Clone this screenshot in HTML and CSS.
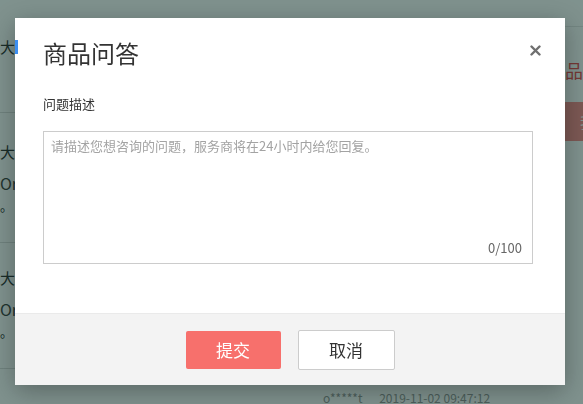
FILE: index.html
```html
<!DOCTYPE html>
<html lang="zh-CN">
<head>
    <meta charset="UTF-8">
    <title>商品问答</title>
    <link rel="stylesheet" href="styles.css">
</head>
<body>
<div class="page">
    <div class="main">
        <div class="intro"><span class="cut">大</span></div>
        <div class="qa-row">
            <p class="q">大</p>
            <p class="a">Or</p>
            <p class="s">。</p>
        </div>
        <div class="qa-row">
            <p class="q">大</p>
            <p class="a">Or</p>
            <p class="s">。</p>
        </div>
        <div class="qa-meta">
            <span class="user">o*****t</span>
            <span class="date">2019-11-02 09:47:12</span>
        </div>
    </div>
    <div class="side">
        <div class="side-title">商品问答</div>
        <button class="side-btn">我要提问</button>
    </div>
</div>

<div class="mask"></div>
<div class="tab-mark"></div>

<div class="modal">
    <div class="modal-head">
        <h2>商品问答</h2>
        <a href="#" class="close">
            <svg width="11" height="11" viewBox="0 0 11 11">
                <path d="M1.5 1.5 L9.5 9.5 M9.5 1.5 L1.5 9.5" stroke="#6f6f6f" stroke-width="2.4" stroke-linecap="round"/>
            </svg>
        </a>
    </div>
    <div class="modal-body">
        <label class="field-label">问题描述</label>
        <div class="text-box">
            <textarea placeholder="请描述您想咨询的问题，服务商将在24小时内给您回复。" maxlength="100"></textarea>
            <span class="count">0/100</span>
        </div>
    </div>
    <div class="modal-foot">
        <button class="btn btn-submit">提交</button>
        <button class="btn btn-cancel">取消</button>
    </div>
</div>
</body>
</html>
```

FILE: styles.css
```css
body {
    margin: 0;
    padding: 0;
    background: #fff;
    font-family: "Noto Sans CJK SC", "Noto Sans", sans-serif;
    color: #333;
    overflow: hidden;
}

.page {
    display: flex;
    height: 404px;
    overflow: hidden;
}

.main {
    width: 565px;
    flex-shrink: 0;
}

.intro {
    height: 112px;
    border-bottom: 1px solid #ddd;
    font-size: 15px;
    line-height: 20px;
}

.intro .cut {
    display: block;
    padding-top: 37px;
}

.qa-row {
    height: 125px;
    border-bottom: 1px solid #ddd;
    padding-top: 4px;
}

.qa-row + .qa-row {
    padding-top: 0;
}

.qa-row p {
    margin: 0;
}

.q {
    font-size: 15px;
    line-height: 20px;
    padding-top: 25px;
}

.a {
    font-size: 16px;
    line-height: 20px;
    padding-top: 11px;
    color: #444;
}

.s {
    font-size: 13px;
    line-height: 14px;
    padding-top: 6px;
}

.qa-meta {
    padding: 20px 0 0 323px;
    font-size: 12px;
    line-height: 18px;
    color: #999;
    white-space: nowrap;
}

.qa-meta .date {
    margin-left: 14px;
}

.side {
    flex-shrink: 0;
    width: 120px;
    margin-top: 26px;
    border-top: 1px solid #e6e6e6;
    margin-left: -18px;
    white-space: nowrap;
}

.side-title {
    font-size: 18px;
    color: #e94c4c;
    padding-top: 28px;
    line-height: 30px;
}

.side-btn {
    display: block;
    margin-top: 17px;
    margin-left: 18px;
    width: 100px;
    height: 39px;
    border: none;
    background: #f98c8b;
    color: #fff;
    font-size: 15px;
    font-family: inherit;
    text-align: left;
    padding-left: 15px;
}

.mask {
    position: fixed;
    top: 0;
    left: 0;
    right: 0;
    bottom: 0;
    background: rgba(0, 38, 30, 0.5);
}

.tab-mark {
    position: fixed;
    left: 15px;
    top: 40px;
    width: 3px;
    height: 14px;
    background: #3d8ff2;
    z-index: 3;
}

.modal {
    position: fixed;
    left: 15px;
    top: 18px;
    width: 550px;
    background: #fff;
    box-shadow: 0 6px 24px rgba(0, 0, 0, 0.3);
    z-index: 2;
}

.modal-head {
    display: flex;
    justify-content: space-between;
    align-items: flex-start;
    padding: 18px 22px 0 28px;
}

.modal-head h2 {
    margin: 0;
    font-size: 24px;
    font-weight: normal;
    line-height: 34px;
    color: #333;
}

.close {
    display: block;
    margin-top: 7px;
    width: 11px;
    height: 11px;
    padding: 2px;
}

.close svg {
    display: block;
}

.modal-body {
    padding: 24px 32px 49px 28px;
}

.field-label {
    display: block;
    font-size: 13px;
    line-height: 20px;
    color: #333;
}

.text-box {
    position: relative;
    margin-top: 17px;
    width: 490px;
}

.text-box textarea {
    display: block;
    box-sizing: border-box;
    width: 490px;
    height: 133px;
    margin: 0;
    border: 1px solid #ccc;
    padding: 4px 7px;
    font-family: inherit;
    font-size: 13px;
    line-height: 20px;
    color: #333;
    resize: none;
    outline: none;
}

.text-box textarea::placeholder {
    color: #a3a3a3;
}

.count {
    position: absolute;
    right: 11px;
    bottom: 6px;
    font-size: 13px;
    line-height: 20px;
    color: #666;
}

.modal-foot {
    display: flex;
    justify-content: center;
    align-items: center;
    gap: 17px;
    height: 71px;
    border-top: 1px solid #eaeaea;
    background: #f3f3f3;
}

.btn {
    font-family: inherit;
    font-size: 17px;
    cursor: pointer;
    padding: 0;
}

.btn-submit {
    width: 95px;
    height: 38px;
    border: none;
    border-radius: 2px;
    background: #f7706c;
    color: #fff;
}

.btn-cancel {
    width: 97px;
    height: 40px;
    border: 1px solid #ccc;
    border-radius: 2px;
    background: #fff;
    color: #333;
}
```
